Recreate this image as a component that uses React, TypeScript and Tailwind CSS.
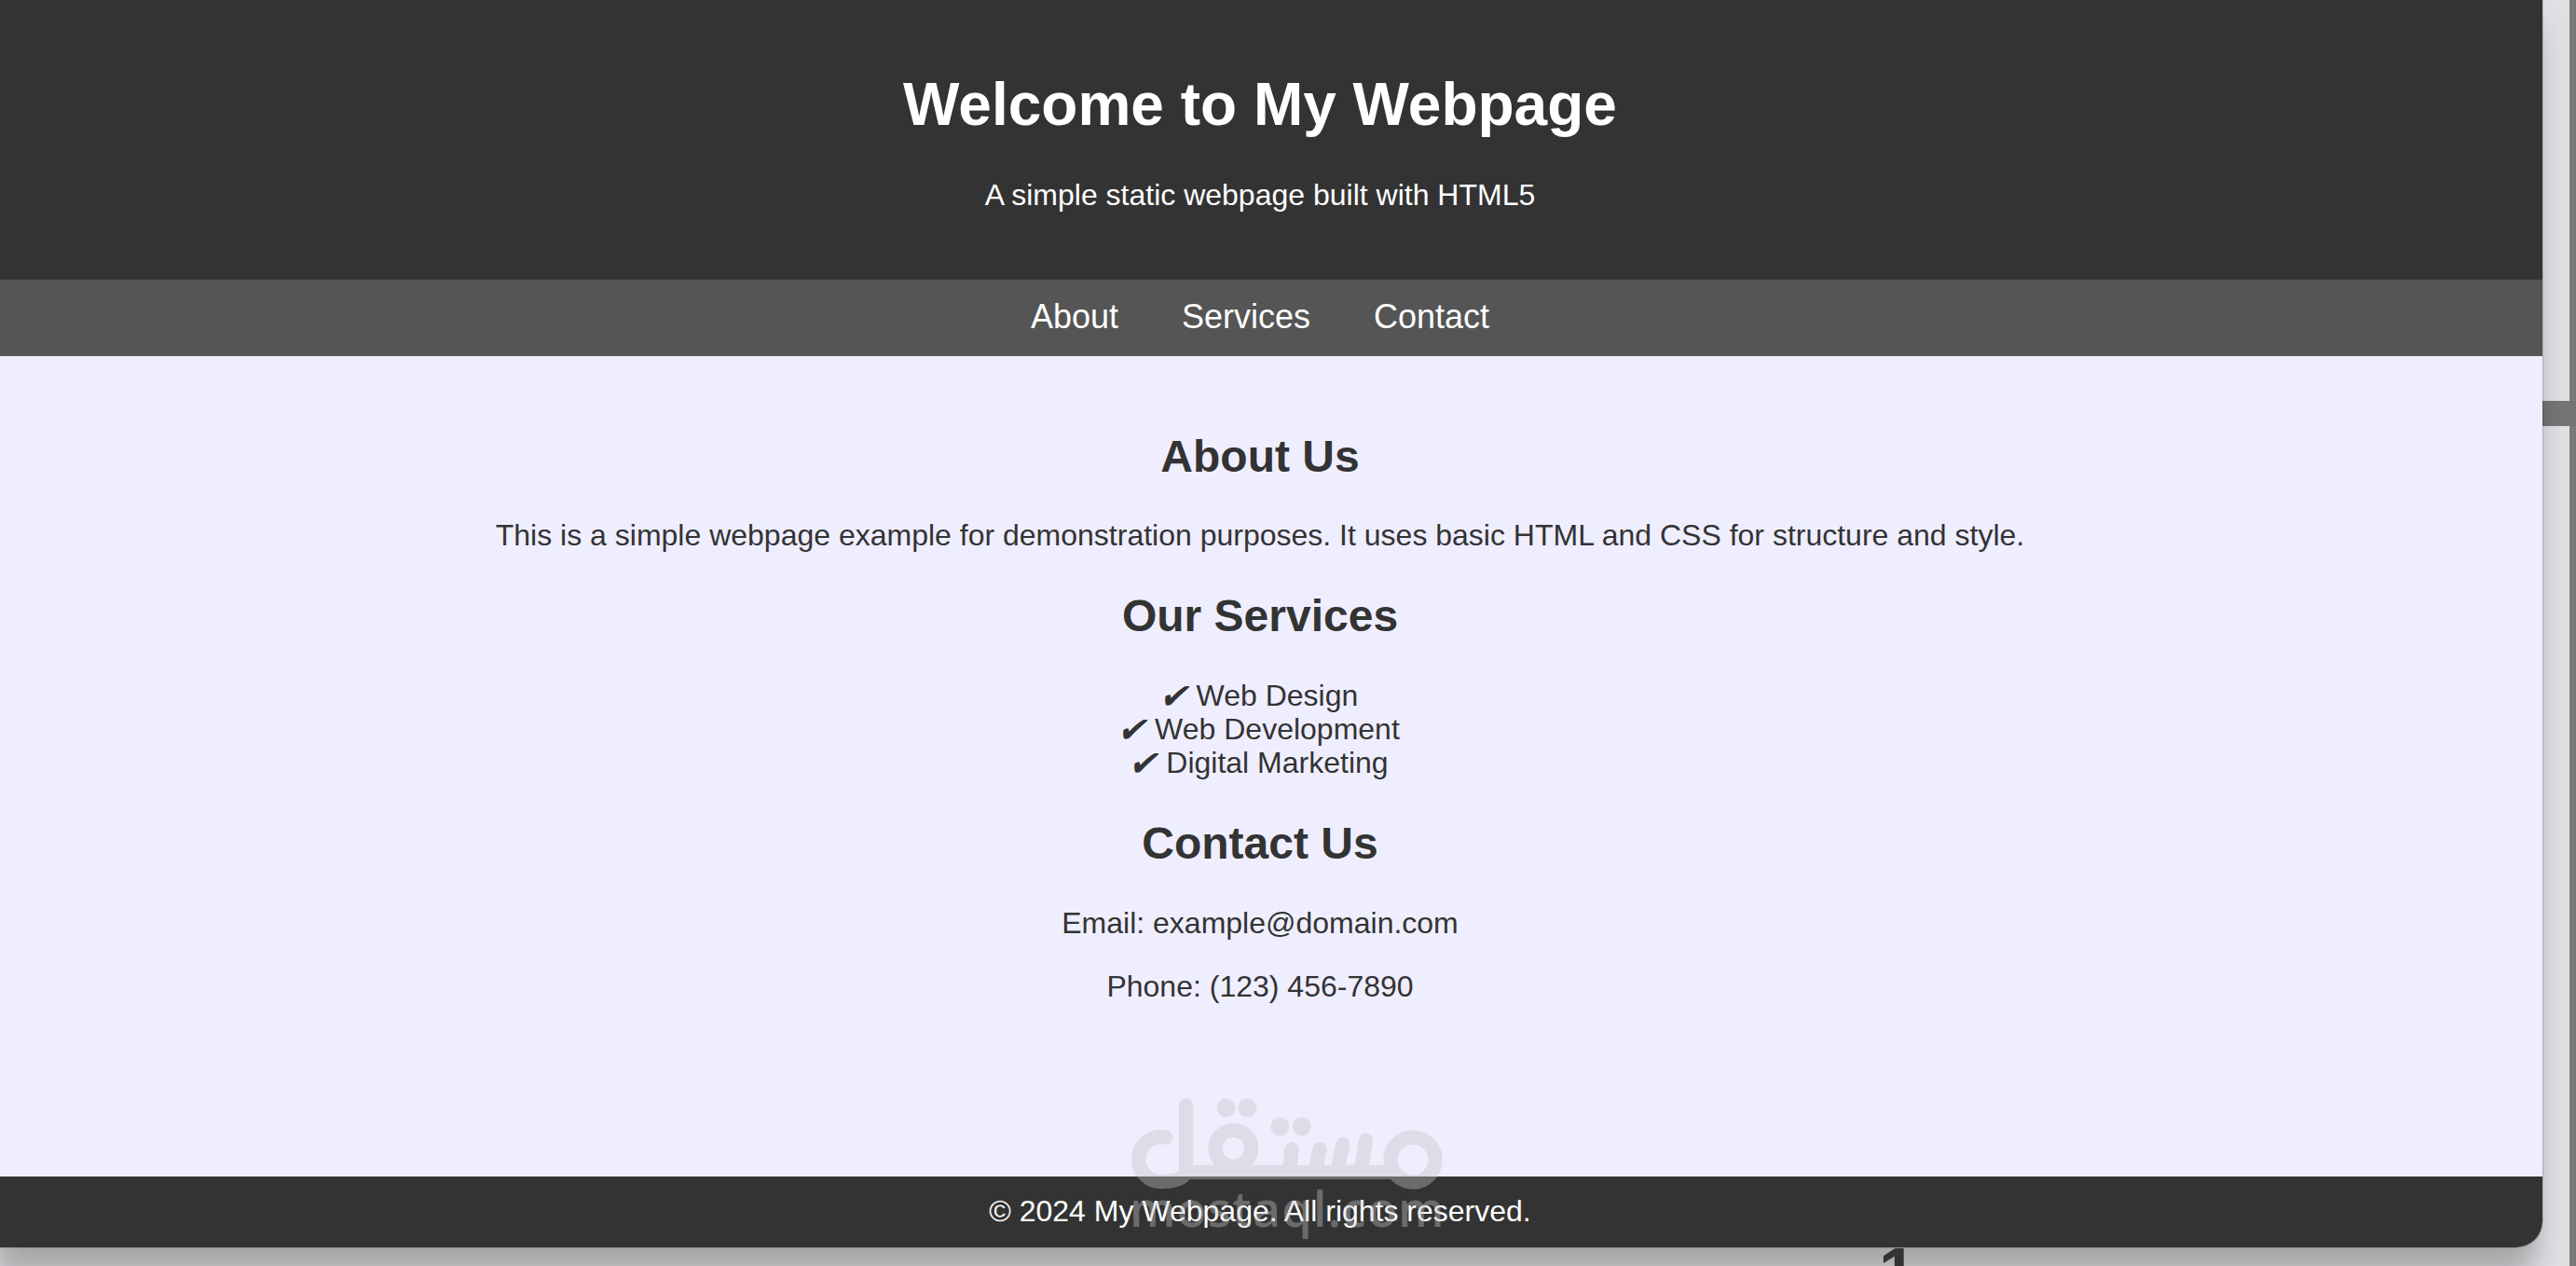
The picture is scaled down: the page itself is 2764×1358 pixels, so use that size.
function Check() {
  return <span className="-ml-[4px] align-[-3px] text-[38px] italic leading-[0]">✔</span>;
}

function Watermark() {
  return (
    <div className="pointer-events-none absolute left-[1180px] top-[1160px] h-[180px] w-[380px]">
      <svg viewBox="0 0 1140 540" className="h-full w-full opacity-[0.39]" fill="none" stroke="#c3c3c3" strokeWidth="46" strokeLinecap="round" strokeLinejoin="round">
        <path d="M212 180 A72 72 0 1 0 205 322 Q262 322 278 292 L278 77" />
        <path d="M278 292 L962 292" strokeLinecap="butt" />
        <circle cx="430" cy="215" r="58" />
        <path d="M618 218 L610 290 M708 218 L695 290 M782 202 L765 290 M857 190 L840 290" />
        <circle cx="1008" cy="252" r="72" />
        <circle cx="407" cy="85" r="30" fill="#c3c3c3" stroke="none" />
        <circle cx="475" cy="85" r="30" fill="#c3c3c3" stroke="none" />
        <circle cx="580" cy="145" r="30" fill="#c3c3c3" stroke="none" />
        <circle cx="650" cy="145" r="30" fill="#c3c3c3" stroke="none" />
      </svg>
      <div className="absolute left-[32px] top-[100px] font-['Open_Sans',sans-serif] text-[52px] font-semibold leading-[72px] tracking-[1.2px] text-[#c3c3c3] opacity-[0.39]">mostaql.com</div>
    </div>
  );
}

export default function App() {
  return (
    <div className="relative h-[1358px] w-full overflow-hidden bg-[#e0e0e4] font-['Liberation_Sans',Arial,sans-serif]">
      <div className="absolute right-0 top-0 h-full w-[7px] bg-[#7a7a7a]" />
      <div className="absolute right-0 top-[430px] h-[27px] w-[36px] bg-[#747474]" />
      <div className="relative z-0 flex h-[1338px] w-[2728px] flex-col rounded-br-[28px] shadow-[-6px_30px_30px_rgba(0,0,0,0.25),0_0_2px_rgba(0,0,0,0.5)]">
        <div className="relative flex h-full flex-col overflow-hidden rounded-br-[28px] bg-[#efeeff] text-center">
          <header className="h-[300px] bg-[#333333] pr-[24px] pt-[70px] text-white">
            <h1 className="text-[64px] font-bold leading-[84px]">Welcome to My Webpage</h1>
            <p className="mt-[35px] text-[32px] leading-[40px]">A simple static webpage built with HTML5</p>
          </header>
          <nav className="flex h-[82px] items-center justify-center gap-[68px] bg-[#555555] pb-[3px] pr-[24px] text-[36px] text-white">
            <span>About</span><span>Services</span><span>Contact</span>
          </nav>
          <main className="flex-1 pr-[24px] pt-[78px] text-[32px] leading-[36px] text-[#333333]">
            <h2 className="text-[48px] font-bold leading-[60px]">About Us</h2>
            <p className="mt-[36px]">This is a simple webpage example for demonstration purposes. It uses basic HTML and CSS for structure and style.</p>
            <h2 className="mt-[39px] text-[48px] font-bold leading-[60px]">Our Services</h2>
            <ul className="mt-[37px]">
              <li><Check /> Web Design</li><li><Check /> Web Development</li><li><Check /> Digital Marketing</li>
            </ul>
            <h2 className="mt-[39px] text-[48px] font-bold leading-[60px]">Contact Us</h2>
            <p className="mt-[37px]">Email: example@domain.com</p>
            <p className="mt-[32px]">Phone: (123) 456-7890</p>
          </main>
          <footer className="flex h-[76px] items-center justify-center bg-[#333333] pb-[3px] pr-[24px] text-[32px] text-white">© 2024 My Webpage. All rights reserved.</footer>
          <Watermark />
        </div>
      </div>
      <div className="absolute left-[2016px] top-[1328px] text-[72px] font-bold leading-none text-[#333333]">1</div>
    </div>
  );
}
